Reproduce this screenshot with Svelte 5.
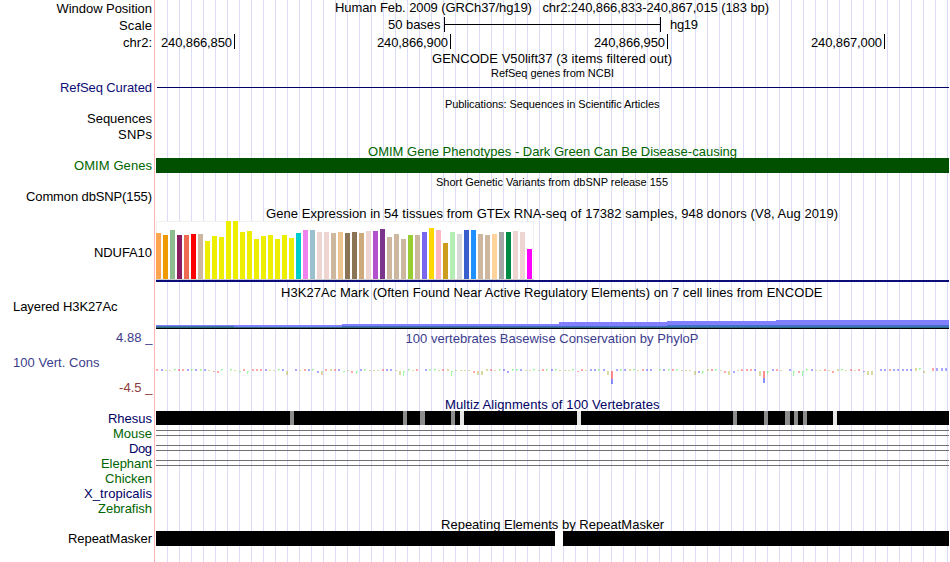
<script>
  const LEFT = 156;
  const RIGHT = 949;
  const BASE = (RIGHT - LEFT) / 183;

  const navy = '#0c0c78';
  const deepNavy = '#000064';
  const green = '#006400';
  const omim = '#005000';
  const slate = '#3c3c8c';
  const maroon = '#8c3c3c';

  // t: text, x: start, w: drawn width, y: baseline
  const rows = [
    {
      h: 16,
      labels: [{ t: 'Window Position', x: 56.5, w: 95.5, y: 13 }],
      titles: [{ t: 'Human Feb. 2009 (GRCh37/hg19)   chr2:240,866,833-240,867,015 (183 bp)', x: 335, w: 434, y: 12 }]
    },
    {
      h: 17,
      kind: 'scale',
      labels: [{ t: 'Scale', x: 119, w: 33, y: 30 }],
      titles: [
        { t: '50 bases', x: 388, w: 52.5, y: 29 },
        { t: 'hg19', x: 670, w: 28, y: 29 }
      ]
    },
    {
      h: 17,
      kind: 'ruler',
      labels: [{ t: 'chr2:', x: 123, w: 29, y: 47 }],
      titles: [
        { t: '240,866,850', x: 161, w: 71, y: 47 },
        { t: '240,866,900', x: 377, w: 71, y: 47 },
        { t: '240,866,950', x: 594, w: 71, y: 47 },
        { t: '240,867,000', x: 811, w: 71, y: 47 }
      ]
    },
    { h: 16, titles: [{ t: 'GENCODE V50lift37 (3 items filtered out)', x: 432, w: 240, y: 63 }] },
    { h: 14, titles: [{ t: 'RefSeq genes from NCBI', x: 491, w: 123, y: 77, small: true }] },
    { h: 16, kind: 'refseq', labels: [{ t: 'RefSeq Curated', x: 60, w: 92, y: 92, color: navy }] },
    { h: 16, titles: [{ t: 'Publications: Sequences in Scientific Articles', x: 445, w: 214.5, y: 108, small: true }] },
    { h: 15, labels: [{ t: 'Sequences', x: 87, w: 65, y: 123 }] },
    { h: 16, labels: [{ t: 'SNPs', x: 118, w: 34, y: 139 }] },
    { h: 15, titles: [{ t: 'OMIM Gene Phenotypes - Dark Green Can Be Disease-causing', x: 368, w: 369, y: 156, color: green }] },
    { h: 15, kind: 'omim', labels: [{ t: 'OMIM Genes', x: 74, w: 78, y: 170, color: green }] },
    { h: 16, titles: [{ t: 'Short Genetic Variants from dbSNP release 155', x: 436, w: 232, y: 186, small: true }] },
    { h: 17, labels: [{ t: 'Common dbSNP(155)', x: 26, w: 126, y: 201 }] },
    { h: 15, titles: [{ t: 'Gene Expression in 54 tissues from GTEx RNA-seq of 17382 samples, 948 donors (V8, Aug 2019)', x: 266, w: 572, y: 218 }] },
    { h: 63, kind: 'gtex', labels: [{ t: 'NDUFA10', x: 94, w: 58, y: 257 }] },
    { h: 16, titles: [{ t: 'H3K27Ac Mark (Often Found Near Active Regulatory Elements) on 7 cell lines from ENCODE', x: 281, w: 541.5, y: 297 }] },
    { h: 30, kind: 'h3k', labels: [{ t: 'Layered H3K27Ac', x: 13, w: 104.5, y: 311 }] },
    {
      h: 16,
      labels: [{ t: '4.88 _', x: 116, w: 36.5, y: 342, color: slate }],
      titles: [{ t: '100 vertebrates Basewise Conservation by PhyloP', x: 405.5, w: 293, y: 343, color: slate }]
    },
    {
      h: 52,
      kind: 'cons',
      labels: [
        { t: '100 Vert. Cons', x: 13, w: 86.5, y: 367, color: slate },
        { t: '-4.5 _', x: 119, w: 33.5, y: 392, color: maroon }
      ]
    },
    { h: 13, titles: [{ t: 'Multiz Alignments of 100 Vertebrates', x: 445, w: 214.5, y: 409, color: deepNavy }] },
    { h: 14, kind: 'rhesus', labels: [{ t: 'Rhesus', x: 108, w: 44, y: 423, color: deepNavy }] },
    { h: 15, kind: 'pair', labels: [{ t: 'Mouse', x: 113, w: 39, y: 438, color: green }] },
    { h: 15, kind: 'pair', labels: [{ t: 'Dog', x: 129, w: 23, y: 453, color: deepNavy }] },
    { h: 15, kind: 'pair', labels: [{ t: 'Elephant', x: 101, w: 51, y: 468, color: green }] },
    { h: 15, labels: [{ t: 'Chicken', x: 105, w: 47, y: 483, color: green }] },
    { h: 15, labels: [{ t: 'X_tropicalis', x: 84, w: 68, y: 498, color: deepNavy }] },
    { h: 15, labels: [{ t: 'Zebrafish', x: 98, w: 54, y: 513, color: green }] },
    { h: 16, titles: [{ t: 'Repeating Elements by RepeatMasker', x: 441, w: 223, y: 529 }] },
    { h: 15, kind: 'repeat', labels: [{ t: 'RepeatMasker', x: 68, w: 84, y: 543 }] },
    { h: 16 }
  ];

  let offset = 0;
  const tracks = rows.map((row) => {
    const top = offset;
    offset += row.h;
    return { ...row, top };
  });

  // bar top and tissue colour, left to right
  const tissues = [
    [233, '#ffa54f'], [235, '#ee9a00'], [230, '#8fbc8f'], [235, '#8b1c62'], [235, '#ee6a50'],
    [234, '#ff0000'], [234, '#cdb79e'], [241, '#eeee00'], [236, '#eeee00'], [237, '#eeee00'],
    [221, '#eeee00'], [221, '#eeee00'], [232, '#eeee00'], [231, '#eeee00'], [239, '#eeee00'],
    [236, '#eeee00'], [235, '#eeee00'], [239, '#eeee00'], [235, '#eeee00'], [238, '#eeee00'],
    [233, '#00cdcd'], [230, '#ee82ee'], [230, '#9ac0cd'], [232, '#eed5d2'], [232, '#eed5d2'],
    [233, '#cdb79e'], [232, '#eec591'], [233, '#8b7355'], [232, '#8b7355'], [233, '#cdaa7d'],
    [231, '#eed5d2'], [231, '#b452cd'], [229, '#7a378b'], [237, '#cdb79e'], [234, '#cdb79e'],
    [239, '#cdb79e'], [235, '#9acd32'], [235, '#cdb79e'], [232, '#7a67ee'], [228, '#ffd700'],
    [230, '#ffb6c1'], [243, '#cd9b1d'], [232, '#b4eeb4'], [234, '#d9d9d9'], [230, '#3a5fcd'],
    [230, '#1e90ff'], [234, '#cdb79e'], [235, '#cdb79e'], [234, '#ffd39b'], [232, '#a6a6a6'],
    [232, '#008b45'], [231, '#eed5d2'], [232, '#eed5d2'], [249, '#ff00ff']
  ];

  const steps = [
    [156, 325], [342, 324], [559, 322], [667, 321], [776, 320]
  ];

  // one character per base: lower case sits on the axis, upper case reaches below it
  const logo =
    'rb--grrbgbgb-sRg.g-trGrrrb--gbY.b-rbgq' +
    'Yryrbt-RGbg---rbb-YZg-r.bgg-ryZ---' +
    '-RYYyr-gbBggb--g-rgbg---gsr-bbgbY1bgbyg-' +
    'rbb.gbgrg---YBGyrg-RYB-rrrbX2Gbr-.bZRZgb--r-Ryg-r-rcYY.bbrbbbbbuvw.xkkk';

  const inks = { r: '#ff5050', b: '#5050ff', g: '#40f040', y: '#b8b840' };
  const shapes = {
    r: ['r', 369, 2], b: ['b', 369, 2], g: ['g', 369, 2], y: ['y', 369, 2],
    R: ['r', 371, 2], B: ['b', 371, 2], G: ['g', 371, 3], Y: ['y', 371, 4],
    Z: ['g', 371, 5], X: ['y', 371, 5], '-': ['y', 370, 1], s: ['r', 371, 1],
    t: ['g', 371, 1], c: ['b', 371, 1], q: ['b', 371, 2],
    u: ['y', 368, 3], v: ['g', 368, 2], w: ['y', 371, 2], x: ['r', 368, 3], k: ['b', 368, 3],
    1: ['r', 371, 8], 2: ['r', 371, 7]
  };

  const marks = [...logo]
    .map((c, i) => ({ x: Math.ceil(LEFT + i * BASE - 0.01), shape: shapes[c], deep: c === '1' || c === '2' }))
    .filter((m) => m.shape);

  // [start, width, colour]
  const gaps = [
    [290, 4, '#8c8c8c'], [403, 4, '#8c8c8c'], [420, 5, '#8c8c8c'], [451, 4, '#8c8c8c'],
    [460, 4, '#e6e6e6'], [577, 4, '#e6e6e6'], [733, 4, '#8c8c8c'], [764, 4, '#8c8c8c'],
    [785, 5, '#8c8c8c'], [794, 4, '#8c8c8c'], [803, 4, '#8c8c8c'], [833, 4, '#e6e6e6']
  ];
</script>

{#snippet words(item)}
  <text
    x={item.x}
    y={item.y}
    textLength={item.w}
    fill={item.color ?? '#000'}
    class:small={item.small}>{item.t}</text>
{/snippet}

<main>
  {#each tracks as track}
    <div class="track">
      <svg width="154" height={track.h} viewBox="0 {track.top} 154 {track.h}">
        {#each track.labels ?? [] as label}
          {@render words(label)}
        {/each}
      </svg>

      <svg width="793" height={track.h} viewBox="{LEFT} {track.top} 793 {track.h}">
        {#if track.kind === 'scale'}
          <path d="M444 17h1v7h215v-7h1v15h-1v-7h-215v7h-1z" />
        {:else if track.kind === 'ruler'}
          {#each [234, 450, 667, 884] as x}
            <rect {x} y="34" width="1" height="15" />
          {/each}
        {:else if track.kind === 'refseq'}
          <rect x="157" y="87" width="792" height="1" fill={deepNavy} />
        {:else if track.kind === 'omim'}
          <rect x={LEFT} y="158" width="793" height="15" fill={omim} />
        {:else if track.kind === 'gtex'}
          <rect x={LEFT} y="221" width="378" height="59" fill="#f0f0f0" />
          <rect x="157" y="222" width="376" height="57" fill="#fff" />
          <rect x={LEFT} y="279" width="378" height="1" fill="#ccc" />
          {#each tissues as [y, fill], i}
            <rect x={LEFT + i * 7} {y} width="5" height={279 - y} {fill} />
          {/each}
          <rect x={LEFT} y="280" width="793" height="2" fill={navy} />
        {:else if track.kind === 'h3k'}
          {#each steps as [x, y]}
            <rect {x} {y} width={RIGHT - x} height={328 - y} fill="#8080ff" />
          {/each}
          <rect x={LEFT} y="326" width="78" height="1" fill="#4070a8" />
          <rect x="342" y="326" width="325" height="1" fill="#4868c8" />
          <rect x="667" y="325" width="282" height="2" fill="#4070c8" />
          <rect x={LEFT} y="327" width="793" height="1" fill="#306c80" />
          <rect x={LEFT} y="328" width="793" height="1" />
        {:else if track.kind === 'cons'}
          {#each marks as { x, deep, shape: [ink, y, h] }}
            {#if ink === 'g' && h > 1}
              <path d="M{x} {y}h2v1h-1v{h - 1}h-1z" fill={inks.g} class="mark" />
            {:else}
              <rect {x} {y} width="2" height={h} fill={inks[ink]} class={deep ? 'deep' : 'mark'} />
            {/if}
            {#if deep}
              <rect {x} y={y + h} width="2" height="5" fill={inks.b} class="deep" />
            {/if}
          {/each}
        {:else if track.kind === 'rhesus'}
          <rect x={LEFT} y="411" width="793" height="14" />
          {#each gaps as [x, width, fill]}
            <rect {x} y="411" {width} height="14" {fill} />
          {/each}
        {:else if track.kind === 'pair'}
          <rect x={LEFT} y={track.top + 5} width="793" height="1" fill="#707070" />
          <rect x={LEFT} y={track.top + 10} width="793" height="1" fill="#707070" />
        {:else if track.kind === 'repeat'}
          <rect x={LEFT} y="531" width="399" height="15" />
          <rect x="555" y="531" width="8" height="15" fill="#fff" />
          <rect x="563" y="531" width="386" height="15" />
        {/if}
        {#each track.titles ?? [] as title}
          {@render words(title)}
        {/each}
      </svg>
    </div>
  {/each}
</main>

<style>
  :global(body) {
    margin: 0;
    background: #fff;
  }

  main {
    display: flex;
    flex-direction: column;
    width: 949px;
    height: 562px;
    overflow: hidden;
    font-family: "Liberation Sans", Arial, sans-serif;
    /* guide lines every 12px behind all tracks */
    background:
      linear-gradient(#ffb4b4, #ffb4b4) 154px 0 / 1px 100% no-repeat,
      repeating-linear-gradient(to right, #dcdcf8 0 1px, transparent 1px 12px) 167px 0 / 782px 100% no-repeat;
  }

  .track {
    display: flex;
    flex: none;
    gap: 2px;
  }

  svg {
    display: block;
    flex: none;
    overflow: visible;
    shape-rendering: crispEdges;
  }

  text {
    font-size: 13px;
    white-space: pre;
  }

  .small {
    font-size: 11px;
  }

  .mark {
    opacity: .5;
  }

  .deep {
    opacity: .65;
  }
</style>
